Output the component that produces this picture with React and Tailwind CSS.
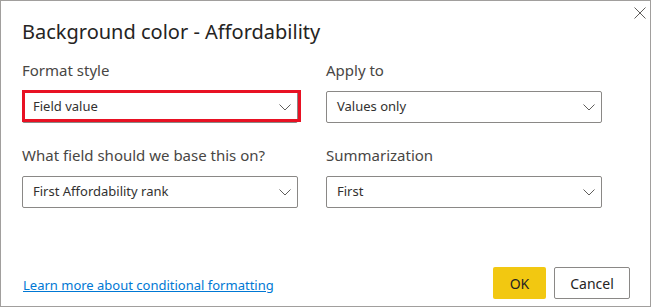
import React from 'react';

const Chevron = () => (
  <svg width="12" height="7" viewBox="0 0 12 7" fill="none" className="shrink-0">
    <path d="M0.5 0.5 L6 6 L11.5 0.5" stroke="#605e5c" strokeWidth="1" />
  </svg>
);

const Select = ({ value, highlight }) => (
  <div className="relative">
    <div className="h-[32px] flex items-center justify-between border border-[#8a8886] rounded-[2px] pl-[10px] pr-[6px] text-[13px] text-[#323130]">
      <span>{value}</span>
      <Chevron />
    </div>
    {highlight && (
      <div className="absolute left-0 top-[-1px] w-[279px] h-[32px] border-[3px] border-[#e81123] pointer-events-none" />
    )}
  </div>
);

const Field = ({ label, value, highlight }) => (
  <div className="flex flex-col">
    <label className="text-[15px] leading-[20px] text-[#484644] mb-[11px]">{label}</label>
    <Select value={value} highlight={highlight} />
  </div>
);

export default function App() {
  return (
    <div className="w-[651px] h-[308px] bg-white" style={{ fontFamily: '"Noto Sans", "Open Sans", sans-serif' }}>
      <div className="relative h-[307px] border border-[#a19f9d] px-[21px] flex flex-col">
        <button className="absolute top-[5px] right-[4px] w-[13px] h-[13px] flex items-center justify-center">
          <svg width="12" height="12" viewBox="0 0 12 12">
            <path d="M0.5 0.5 L11.5 11.5 M11.5 0.5 L0.5 11.5" stroke="#605e5c" strokeWidth="1" />
          </svg>
        </button>

        <h1 className="mt-[17px] text-[20px] leading-[28px] text-[#252423]">Background color - Affordability</h1>

        <div className="mt-[14px] grid grid-cols-[276px_276px] gap-x-[28px] gap-y-[22px]">
          <Field label="Format style" value="Field value" highlight />
          <Field label="Apply to" value="Values only" />
          <Field label="What field should we base this on?" value="First Affordability rank" />
          <Field label="Summarization" value="First" />
        </div>

        <div className="mt-auto mb-[7px] flex items-center justify-between">
          <a href="#" className="text-[13px] text-[#0078d4] underline mt-[6px] ml-[1px]">Learn more about conditional formatting</a>
          <div className="flex gap-[8px] mr-[-1px]">
            <button className="w-[53px] h-[32px] bg-[#f2c811] rounded-[2px] text-[14px] text-[#252423]">OK</button>
            <button className="w-[76px] h-[32px] bg-white border border-[#8a8886] rounded-[2px] text-[14px] text-[#252423]">Cancel</button>
          </div>
        </div>
      </div>
    </div>
  );
}
